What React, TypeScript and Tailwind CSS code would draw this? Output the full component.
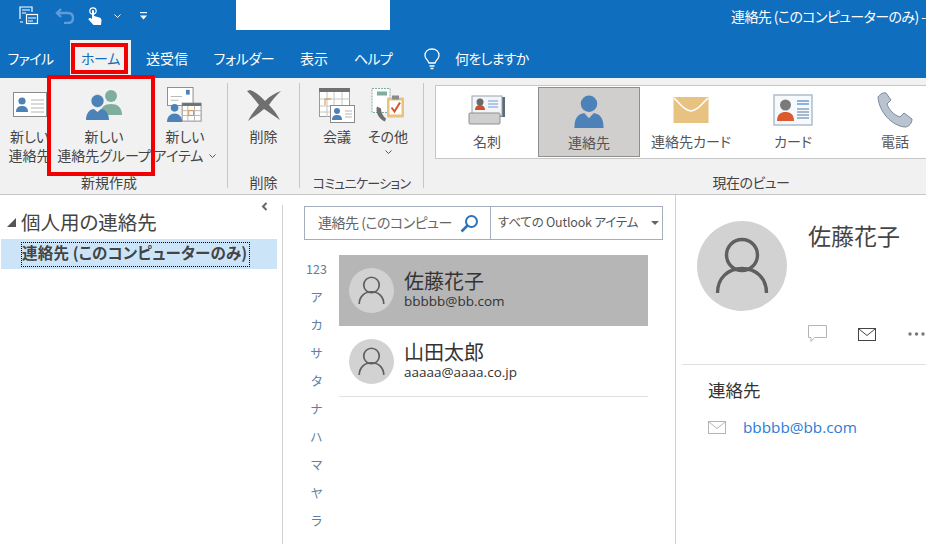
import type { ReactNode } from "react";

const UserGlyph = ({ size }: { size: number }) => (
  <div className="rounded-full bg-[#d2d2d2] flex items-center justify-center shrink-0" style={{ width: size, height: size }}>
    <svg viewBox="0 0 90 90" className="w-full h-full" fill="none" stroke="#5f5f5f" strokeWidth="3.4">
      <circle cx="45" cy="34" r="15.5" />
      <path d="M20.5 72 C20.5 57 31 47.5 45 47.5 C59 47.5 69.5 57 69.5 72" />
    </svg>
  </div>
);

const Chev = ({ color = "#555" }: { color?: string }) => (
  <svg width="7" height="4" viewBox="0 0 7 4" fill="none" stroke={color} strokeWidth="1">
    <path d="M0.5 0.5L3.5 3.5L6.5 0.5" />
  </svg>
);

const PeopleIcon = ({ className = "" }: { className?: string }) => (
  <svg viewBox="0 0 30 34" className={className}>
    <circle cx="15" cy="9" r="8.5" fill="#4d82b8" />
    <path d="M0 34 C0 24 3 20 10 18.5 L15 24 L20 18.5 C27 20 30 24 30 34Z" fill="#4d82b8" />
  </svg>
);

const NewContactIcon = () => (
  <svg width="34" height="26" viewBox="0 0 34 26">
    <rect x="0.5" y="0.5" width="33" height="24" fill="#fff" stroke="#8a8a8a" />
    <circle cx="9" cy="9" r="3.6" fill="#4d82b8" />
    <path d="M3 20 C3 15 6 14 9 14 C12 14 15 15 15 20Z" fill="#4d82b8" />
    <path d="M18 8h13M18 12h13M18 16h13M18 20h13" stroke="#b5b5b5" />
  </svg>
);

const GroupIcon = () => (
  <svg width="38" height="32" viewBox="0 0 38 32">
    <circle cx="26" cy="7" r="6" fill="#7fae9f" />
    <path d="M15 26 C15 18 20 15 26 15 C32 15 37 18 37 26Z" fill="#7fae9f" />
    <circle cx="12.5" cy="12" r="6.5" fill="#4d82b8" stroke="#f1f1f1" strokeWidth="0.6" />
    <path d="M1 31 C1 23 6 20 9 20 L12.5 23 L16 20 C19 20 24 23 24 31Z" fill="#4d82b8" />
  </svg>
);

const NewItemIcon = () => (
  <svg width="38" height="36" viewBox="0 0 38 38">
    <rect x="0.5" y="0.5" width="27" height="19" fill="#fff" stroke="#8a8a8a" />
    <rect x="20" y="3" width="4" height="5" fill="#4d82b8" />
    <path d="M4 10h12M4 14h8" stroke="#b5b5b5" />
    <rect x="16" y="17" width="20" height="19" fill="#fff" stroke="#8a8a8a" />
    <rect x="16" y="17" width="20" height="3" fill="#6f6f6f" />
    <path d="M16 25h20M16 30h20M22 20v16M29 20v16" stroke="#b5b5b5" />
    <rect x="23" y="25" width="5" height="5" fill="#fff" stroke="#e08a2c" />
    <circle cx="8" cy="22" r="4" fill="#4d82b8" />
    <path d="M0 37 C0 31 4 28 8 28 C12 28 16 31 16 37Z" fill="#4d82b8" />
  </svg>
);

const DeleteIcon = () => (
  <svg width="36" height="34" viewBox="0 0 36 34">
    <path d="M4 2 C10 4 15 9 19 13 C24 8 29 5 35 3 C30 8 26 12 23 17 C27 21 31 26 34 32 C28 28 23 24 18 21 C13 25 8 29 2 33 C5 27 9 22 13 17 C9 12 5 7 1 3Z" fill="#6f6f6f" />
  </svg>
);

const MeetingIcon = () => (
  <svg width="36" height="35" viewBox="0 0 36 35">
    <rect x="0.5" y="0.5" width="30" height="28" fill="#fff" stroke="#9a9a9a" />
    <rect x="0" y="0" width="31" height="4" fill="#707070" />
    <path d="M1 11h30M1 18h30M1 24h30M8 4v25M15 4v25M23 4v25" stroke="#c4c4c4" />
    <path d="M6 17v-6h6" fill="none" stroke="#e08a2c" />
    <rect x="11.5" y="17.5" width="24" height="17" fill="#fff" stroke="#8a8a8a" />
    <circle cx="18" cy="23" r="3" fill="#4d82b8" />
    <path d="M13 32 C13 28 15 27 18 27 C21 27 23 28 23 32Z" fill="#4d82b8" />
    <path d="M26 23h7M26 26h7M26 29h7" stroke="#b5b5b5" />
  </svg>
);

const OtherIcon = () => (
  <svg width="34" height="36" viewBox="0 0 34 35">
    <rect x="1" y="1" width="18" height="24" fill="#fff" stroke="#7fae9f" strokeDasharray="2 1" />
    <rect x="6" y="4" width="10" height="4" fill="#7fae9f" />
    <path d="M6 19 C4 24 8 32 14 34 L15 31 C12 29 10 25 10 21Z" fill="#6f6f6f" />
    <rect x="16" y="10" width="17" height="20" rx="1" fill="#e9c27e" />
    <rect x="18.5" y="13" width="12" height="14" fill="#fff" />
    <rect x="21" y="8" width="7" height="4" fill="#8a8a8a" />
    <path d="M20.5 20 L23.5 24 L29 15" fill="none" stroke="#d5532c" strokeWidth="2" />
  </svg>
);

const BusinessCardIcon = () => (
  <svg width="38" height="30" viewBox="0 0 38 30">
    <rect x="30" y="2" width="7" height="20" fill="#5f6a78" />
    <rect x="4" y="1" width="30" height="20" fill="#f3f5f8" stroke="#9aa4b0" />
    <circle cx="12" cy="7" r="3.5" fill="#6a6a6a" />
    <path d="M7 15 C7 11 10 10 12 10 C14 10 17 11 17 15Z" fill="#c9512c" />
    <path d="M20 6h10M20 9h10M20 12h10" stroke="#6b9bd2" />
    <rect x="1" y="18" width="31" height="11" rx="1" fill="#cfcfcf" stroke="#8f8f8f" />
  </svg>
);

const EnvelopeIcon = () => (
  <svg width="36" height="26" viewBox="0 0 36 26">
    <rect width="35" height="26" x="0.5" fill="#e8c281" />
    <path d="M1 1 C9 9 13 14 18 14 C23 14 27 9 35 1" fill="none" stroke="#fff" strokeWidth="1.6" />
  </svg>
);

const CardViewIcon = () => (
  <svg width="40" height="32" viewBox="0 0 40 32">
    <rect x="1" y="1" width="38" height="30" fill="#f7fafd" stroke="#a9b8c8" strokeWidth="1.4" />
    <circle cx="12.5" cy="11" r="5.5" fill="#7a7a7a" />
    <path d="M4 27 C4 20 8 18 12.5 18 C17 18 21 20 21 27Z" fill="#dd5a2e" />
    <path d="M24 7h12M24 10h12" stroke="#6b9bd2" strokeWidth="1.4" />
    <path d="M24 15h12M24 18h12M24 21h12M24 24h12" stroke="#8aa3bf" strokeWidth="1.4" />
  </svg>
);

const PhoneIcon = () => (
  <svg width="36" height="36" viewBox="0 0 36 36">
    <path d="M1 5 C3 2 7 0 9 1 L14 8 L10 12 C12 18 17 23 23 25 L27 21 L35 27 C35 31 32 35 28 35 C15 34 2 20 1 5Z" fill="#b9c4d0" stroke="#7d8a98" strokeWidth="1" />
  </svg>
);

const RibbonBtn = ({ icon, lines, width, chevron }: { icon: ReactNode; lines: ReactNode[]; width: string; chevron?: boolean }) => (
  <div className={"flex flex-col items-center shrink-0 " + width}>
    <div className="h-[44px] flex items-center justify-center">{icon}</div>
    <div className="text-[14px] leading-[19px] text-center text-[#444] whitespace-nowrap">
      {lines.map((l, i) => (
        <div key={i} className="flex items-center justify-center">{l}</div>
      ))}
    </div>
    {chevron && <div className="h-[12px] flex items-center"><Chev /></div>}
  </div>
);

const ViewItem = ({ icon, label, active, width }: { icon: ReactNode; label: string; active?: boolean; width: string }) => (
  <div className={"flex flex-col items-center shrink-0 h-[70px] box-border " + width + (active ? " bg-[#d0cfcd] border border-[#8e8e8e]" : "")}>
    <div className="h-[42px] mt-[2px] flex items-center justify-center">{icon}</div>
    <div className="text-[14px] leading-[20px] text-[#555] whitespace-nowrap">{label}</div>
  </div>
);

const Group = ({ label, width, labelClass = "text-[14px]", children }: { label: string; width: string; labelClass?: string; children: ReactNode }) => (
  <div className={"flex flex-col shrink-0 h-[105px] border-r border-[#c6c6c6] " + width}>
    <div className="h-[90px] flex shrink-0">{children}</div>
    <div className={"leading-[19px] text-[#444] text-center whitespace-nowrap " + labelClass}>{label}</div>
  </div>
);

const ContactCard = ({ name, email, selected }: { name: string; email: string; selected?: boolean }) => (
  <div className={"h-[71px] flex items-center pl-[10px] box-border " + (selected ? "bg-[#b6b6b6]" : "border-b border-[#e1e1e1]")}>
    <UserGlyph size={45} />
    <div className="ml-[10px] text-[#333] pb-[3px]">
      <div className="text-[20px] leading-[24px]">{name}</div>
      <div className="text-[13.5px] leading-[16px] font-['Open_Sans',sans-serif]">{email}</div>
    </div>
  </div>
);

const Tab = ({ label, width }: { label: string; width: string }) => (
  <div className={"text-[14px] text-white text-center whitespace-nowrap shrink-0 pb-[2px] " + width}>{label}</div>
);

export default function App() {
  const index = ["123", "ア", "カ", "サ", "タ", "ナ", "ハ", "マ", "ヤ", "ラ"];

  return (
    <div className="relative w-[926px] h-[544px] overflow-hidden bg-white font-['Noto_Sans_CJK_JP','Noto_Sans',sans-serif] [font-feature-settings:'palt']">
      {/* title bar */}
      <div className="h-[40px] bg-[#106ebe] flex items-start overflow-hidden">
        <div className="w-[236px] h-[30px] flex items-center pl-[19px] pt-[2px] shrink-0">
          <svg width="20" height="20" viewBox="0 0 20 20" fill="none" stroke="#fff" strokeWidth="1.2">
            <path d="M1 13V1h12v5M3 4h8M3 7h4M1 16h3" />
            <rect x="7.5" y="8.5" width="11" height="9" fill="#106ebe" />
            <path d="M9 12h8M9 15h5" />
          </svg>
          <svg className="ml-[16px]" width="20" height="16" viewBox="0 0 20 16" fill="none" stroke="#5f9bd6" strokeWidth="2.4">
            <path d="M6 1 L2 5 L6 9M2 5H13C16 5 18 7 18 10C18 13 16 15 13 15H9" />
          </svg>
          <svg className="ml-[13px]" width="14" height="18" viewBox="0 0 14 18">
            <circle cx="5" cy="4" r="3.2" fill="none" stroke="#fff" strokeWidth="1.2" />
            <path d="M4 4 C4 2.8 6 2.8 6 4V9L11.5 10.5C13 11 13.5 12 13.5 13.5L13 18H5.5L0.5 12.5C0.5 11 2.5 10.5 4 12Z" fill="#fff" />
          </svg>
          <span className="ml-[12px] flex"><Chev color="#fff" /></span>
          <svg className="ml-[19px]" width="8" height="8" viewBox="0 0 8 8" fill="#fff">
            <rect y="0" width="7" height="1.2" />
            <path d="M0 3.5H7L3.5 7.5Z" />
          </svg>
        </div>
        <div className="w-[154px] h-[30px] bg-white shrink-0" />
        <div className="ml-[341px] mt-[6px] text-[14px] leading-[20px] tracking-[-0.6px] text-white whitespace-nowrap">連絡先 (このコンピューターのみ) -</div>
      </div>

      {/* tabs */}
      <div className="h-[38px] bg-[#106ebe] flex items-center">
        <Tab label="ファイル" width="w-[70px] pr-[9px] tracking-[-0.6px]" />
        <div className="w-[61px] h-[38px] bg-[#f1f1f1] shrink-0 flex items-center justify-center pb-[2px] text-[14px] tracking-[-0.3px] text-[#106ebe]">ホーム</div>
        <Tab label="送受信" width="w-[72px] text-[14.5px]" />
        <Tab label="フォルダー" width="w-[82px] tracking-[-0.3px]" />
        <Tab label="表示" width="w-[58px]" />
        <Tab label="ヘルプ" width="w-[60px] tracking-[-0.6px]" />
        <svg className="ml-[20px]" width="18" height="22" viewBox="0 0 18 22" fill="none" stroke="#fff" strokeWidth="1.3">
          <path d="M6 15 C5 12 2 11 2 7.5 C2 3.5 5 1 9 1 C13 1 16 3.5 16 7.5 C16 11 13 12 12 15ZM6.5 18H11.5M7.5 20.5H10.5" />
        </svg>
        <span className="ml-[14px] pb-[2px] text-[14px] tracking-[-0.7px] text-white whitespace-nowrap">何をしますか</span>
      </div>

      {/* ribbon */}
      <div className="h-[117px] bg-[#f1f1f1] border-b border-[#c6c6c6] box-border flex items-start pt-[5px]">
        <Group label="新規作成" width="w-[228px] pr-[9px]">
          <RibbonBtn width="w-[47px] pl-[12px]" lines={["新しい", "連絡先"]} icon={<NewContactIcon />} />
          <RibbonBtn width="w-[106px] pl-[8px]" lines={["新しい", "連絡先グループ"]} icon={<GroupIcon />} />
          <RibbonBtn
            width="w-[62px] pl-[2px]"
            lines={[
              "新しい",
              <span key="item" className="flex items-center gap-[6px]">アイテム<Chev /></span>,
            ]}
            icon={<NewItemIcon />}
          />
        </Group>
        <Group label="削除" width="w-[72px]">
          <RibbonBtn width="w-[71px]" lines={["削除"]} icon={<DeleteIcon />} />
        </Group>
        <Group label="コミュニケーション" width="w-[124px]" labelClass="text-[13px] tracking-[-0.7px]">
          <RibbonBtn width="w-[68px] pl-[6px]" lines={["会議"]} icon={<MeetingIcon />} />
          <RibbonBtn width="w-[40px]" lines={["その他"]} chevron icon={<OtherIcon />} />
        </Group>
        <div className="flex flex-col flex-1 min-w-0 pl-[11px] h-[105px]">
          <div className="h-[74px] w-[600px] mt-[2px] bg-white border border-[#c6c6c6] border-r-0 box-border flex items-center shrink-0">
            <ViewItem width="w-[102px]" label="名刺" icon={<BusinessCardIcon />} />
            <ViewItem width="w-[102px]" label="連絡先" active icon={<PeopleIcon className="w-[30px] h-[33px]" />} />
            <ViewItem width="w-[102px]" label="連絡先カード" icon={<EnvelopeIcon />} />
            <ViewItem width="w-[102px]" label="カード" icon={<CardViewIcon />} />
            <ViewItem width="w-[102px]" label="電話" icon={<PhoneIcon />} />
          </div>
          <div className="mt-[14px] text-[14px] leading-[19px] tracking-[-0.5px] text-[#444] w-[632px] text-center whitespace-nowrap">現在のビュー</div>
        </div>
      </div>

      {/* body */}
      <div className="flex h-[349px]">
        <div className="relative w-[283px] shrink-0 border-r border-[#d0d0d0] box-border mt-[10px] h-[339px]">
          <svg className="absolute right-[14px] -top-[3px]" width="7" height="9" viewBox="0 0 7 9" fill="none" stroke="#666" strokeWidth="2">
            <path d="M5.5 1L2 4.5L5.5 8" />
          </svg>
          <div className="flex items-center h-[34px] pl-[7px]">
            <svg width="9" height="9" viewBox="0 0 9 9"><path d="M9 0V9H0Z" fill="#555" /></svg>
            <span className="ml-[5px] text-[19.5px] text-[#444] whitespace-nowrap">個人用の連絡先</span>
          </div>
          <div className="h-[30px] w-[276px] ml-[1px] bg-[#cce4f7] flex items-center pl-[20px]">
            <div className="h-[25px] w-[229px] border border-dotted border-black box-border flex items-center pb-[2px] text-[15.5px] tracking-[0.2px] font-bold text-[#444] whitespace-nowrap">連絡先 (このコンピューターのみ)</div>
          </div>
        </div>

        <div className="w-[393px] shrink-0 border-r border-[#d0d0d0] box-border pt-[11px]">
          <div className="ml-[21px] w-[359px] h-[34px] border border-[#a6adbd] box-border flex items-center">
            <div className="w-[186px] h-full border-r border-[#a6adbd] box-border flex items-center justify-between pl-[13px] pr-[11px] text-[14px] tracking-[-0.5px] text-[#666] whitespace-nowrap">
              <span className="pb-[2px]">連絡先 (このコンピュー</span>
              <svg width="19" height="19" viewBox="0 0 19 19" fill="none" stroke="#2b72b8" strokeWidth="2">
                <circle cx="11.5" cy="7.5" r="5.5" />
                <path d="M7.5 11.5L1.5 17.5" strokeWidth="2.5" />
              </svg>
            </div>
            <div className="flex-1 flex items-center justify-between pl-[7px] pr-[3px] text-[12.5px] tracking-[-0.2px] text-[#555] whitespace-nowrap">
              <span className="pb-[2px]">すべての Outlook アイテム</span>
              <svg width="8" height="4" viewBox="0 0 8 4"><path d="M0 0H8L4 4Z" fill="#666" /></svg>
            </div>
          </div>
          <div className="flex mt-[15px]">
            <div className="w-[56px] shrink-0 pl-[20px] pr-[9px]">
              {index.map((c) => (
                <div key={c} className="h-[28px] leading-[28px] text-center text-[12.5px] text-[#5d7fa3] whitespace-nowrap">{c}</div>
              ))}
            </div>
            <div className="w-[309px] shrink-0">
              <ContactCard name="佐藤花子" email="bbbbb@bb.com" selected />
              <ContactCard name="山田太郎" email="aaaaa@aaaa.co.jp" />
            </div>
          </div>
        </div>

        <div className="flex-1 min-w-0 overflow-hidden pt-[26px]">
          <div className="flex pl-[21px] h-[90px]">
            <UserGlyph size={90} />
            <div className="ml-[21px] text-[23px] leading-[28px] text-[#444] whitespace-nowrap">佐藤花子</div>
          </div>
          <div className="flex items-center h-[46px] pl-[132px]">
            <svg width="19" height="18" viewBox="0 0 19 18" fill="none" stroke="#b4b4b4">
              <path d="M0.5 0.5H18.5V12.5H6.5L3 16.5V12.5H0.5Z" />
            </svg>
            <svg className="ml-[31px]" width="18" height="13" viewBox="0 0 18 13" fill="none" stroke="#444">
              <rect x="0.5" y="0.5" width="17" height="12" />
              <path d="M1 1L9 7.5L17 1" />
            </svg>
            <svg className="ml-[32px]" width="17" height="4" viewBox="0 0 17 4" fill="#777">
              <circle cx="2" cy="2" r="1.7" />
              <circle cx="8.5" cy="2" r="1.7" />
              <circle cx="15" cy="2" r="1.7" />
            </svg>
          </div>
          <div className="h-[8px] ml-[6px] border-b border-[#e1e1e1]" />
          <div className="pl-[32px] mt-[13px] text-[17.5px] leading-[24px] text-[#333]">連絡先</div>
          <div className="flex items-center pl-[32px] mt-[13px] h-[24px]">
            <svg width="18" height="13" viewBox="0 0 18 13" fill="none" stroke="#b4b4b4">
              <rect x="0.5" y="0.5" width="17" height="12" />
              <path d="M1 1L9 7.5L17 1" />
            </svg>
            <span className="ml-[17px] text-[15.3px] text-[#2b7cd3] font-['Open_Sans',sans-serif]">bbbbb@bb.com</span>
          </div>
        </div>
      </div>

      {/* red highlights from the original capture */}
      <div className="absolute left-[71px] top-[43px] w-[57px] h-[31px] border-[4px] border-[#f00000] box-border pointer-events-none" />
      <div className="absolute left-[47px] top-[75px] w-[108px] h-[101px] border-[4px] border-[#f00000] box-border pointer-events-none" />
    </div>
  );
}
